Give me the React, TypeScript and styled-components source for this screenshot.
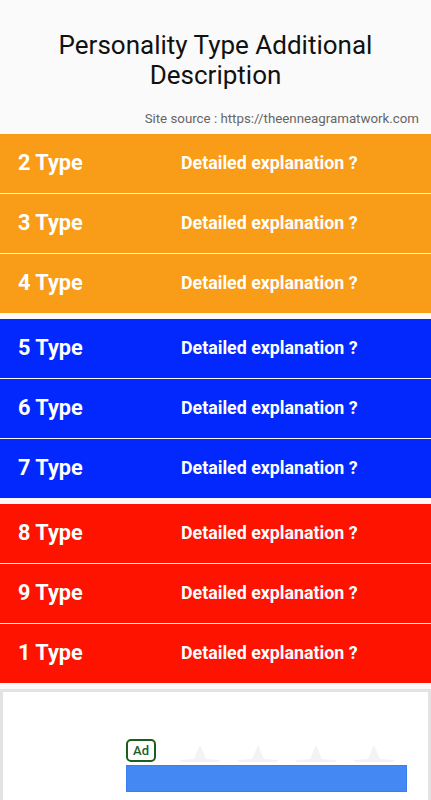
import React from "react";
import styled, { createGlobalStyle } from "styled-components";

const GlobalStyle = createGlobalStyle`
  html, body {
    margin: 0;
    padding: 0;
    background: #fafafa;
    font-family: Roboto, "Noto Sans", sans-serif;
  }
`;

const groups = [
  { color: "#f99c17", types: [2, 3, 4] },
  { color: "#0228fe", types: [5, 6, 7] },
  { color: "#fe1200", types: [8, 9, 1] },
];

export default function App() {
  return (
    <Page>
      <GlobalStyle />
      <Title>Personality Type Additional Description</Title>
      <Source>Site source : https://theenneagramatwork.com</Source>
      <Groups>
        {groups.map((g) => (
          <Group key={g.color}>
            {g.types.map((t) => (
              <Row key={t} $color={g.color}>
                <TypeLabel>{t} Type</TypeLabel>
                <Explain>Detailed explanation ?</Explain>
              </Row>
            ))}
          </Group>
        ))}
      </Groups>
      <AdBox>
        <AdInner>
          <AdHead>
            <AdBadge>Ad</AdBadge>
            <Stars width="240" height="24" viewBox="0 0 240 24">
              {[0, 1, 2, 3, 4].map((i) => {
                const cx = 40 + i * 58;
                return (
                  <polygon
                    key={i}
                    fill="#f3f3f3"
                    points={`${cx},4 ${cx + 6},18 ${cx + 21},19 ${cx + 9},28 ${cx - 9},28 ${cx - 21},19 ${cx - 6},18`}
                  />
                );
              })}
            </Stars>
          </AdHead>
          <AdBar />
        </AdInner>
      </AdBox>
    </Page>
  );
}

const Page = styled.div`
  width: 431px;
  min-height: 800px;
  overflow: hidden;
  background: #fafafa;
`;

const Title = styled.h1`
  margin: 0;
  padding: 30px 40px 0;
  font-size: 26px;
  line-height: 30px;
  font-weight: 400;
  text-align: center;
  color: #111;
`;

const Source = styled.div`
  margin-top: 21px;
  padding-right: 12px;
  text-align: right;
  font-size: 13.3px;
  line-height: 16px;
  color: #666;
`;

const Groups = styled.div`
  margin-top: 7px;
  display: flex;
  flex-direction: column;
  gap: 6px;
`;

const Group = styled.div`
  display: flex;
  flex-direction: column;
  gap: 1px;
`;

const Row = styled.div<{ $color: string }>`
  box-sizing: border-box;
  height: 59px;
  display: grid;
  grid-template-columns: 163px 1fr;
  align-items: center;
  padding: 0 0 3px 18px;
  background: ${(p) => p.$color};
  color: #fff;
`;

const TypeLabel = styled.div`
  font-size: 21.7px;
  font-weight: 700;
`;

const Explain = styled.div`
  font-size: 17.8px;
  font-weight: 700;
`;

const AdBox = styled.div`
  margin-top: 6px;
  border: 3px solid #e3e3e3;
  border-bottom: none;
  background: #fff;
  height: 120px;
`;

const AdInner = styled.div`
  padding: 46px 0 0 123px;
  width: 281px;
`;

const AdHead = styled.div`
  display: flex;
  align-items: flex-end;
  height: 24px;
  margin-bottom: 3px;
  overflow: hidden;
`;

const AdBadge = styled.div`
  flex: none;
  box-sizing: border-box;
  width: 30px;
  height: 23px;
  border: 2px solid #1d5e1d;
  border-radius: 5px;
  color: #1d5e1d;
  font-size: 13px;
  font-weight: 500;
  display: flex;
  align-items: center;
  justify-content: center;
`;

const Stars = styled.svg`
  display: block;
  flex: none;
  margin-left: 4px;
  margin-bottom: -3px;
`;

const AdBar = styled.div`
  height: 27px;
  background: #4488f4;
  border: 1px solid #3a7ff0;
  box-sizing: border-box;
`;
